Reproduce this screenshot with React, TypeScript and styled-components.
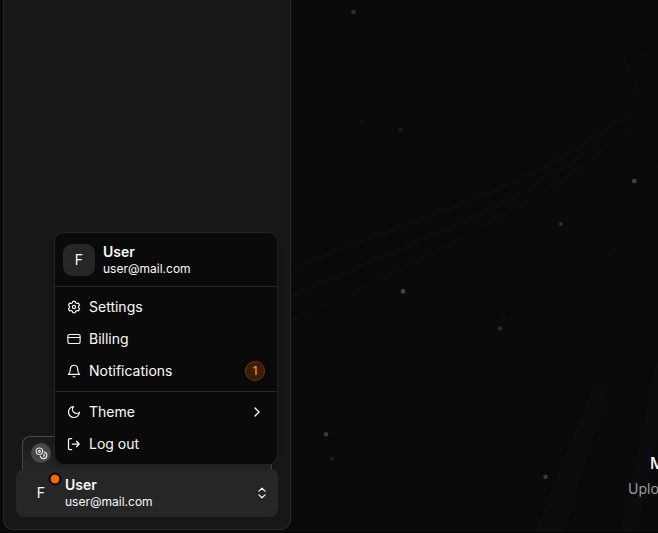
import React from 'react';
import styled, { createGlobalStyle } from 'styled-components';
import { ChevronRight } from 'lucide-react';

const GlobalStyle = createGlobalStyle`
  * { box-sizing: border-box; }
  body {
    margin: 0;
    overflow: hidden;
    background: #0a0a0a;
    color: #fafafa;
    font-family: Inter, "Liberation Sans", sans-serif;
    font-size: 14px;
    line-height: 20px;
  }
`;

const Page = styled.div`
  display: flex;
  width: 100vw;
  height: 533px;
  position: relative;
  overflow: hidden;
  border-bottom: 1px solid #030303;
`;

const Sidebar = styled.aside`
  position: relative;
  width: 288px;
  height: 530px;
  margin-left: 3px;
  padding: 0 12px 12px;
  flex: none;
  display: flex;
  flex-direction: column;
  justify-content: flex-end;
  background: #171717;
  border: 1px solid #272727;
  border-top: 0;
  border-radius: 0 0 10px 10px;
`;

const UsageCard = styled.div`
  height: 33px;
  margin: 0 6px;
  padding: 6px 8px;
  border: 1px solid #484848;
  border-bottom: 0;
  border-radius: 8px 8px 0 0;
  background: linear-gradient(#1a1a1a, #252525);
`;

const UsageIcon = styled.span`
  display: flex;
  align-items: center;
  justify-content: center;
  width: 20px;
  height: 20px;
  border-radius: 50%;
  background: #484848;
  color: #e5e5e5;
`;

const UserButton = styled.button`
  display: flex;
  align-items: center;
  gap: 8px;
  width: 262px;
  height: 48px;
  padding: 8px 9px;
  border: 0;
  border-radius: 8px;
  background: #262626;
  color: inherit;
  font: inherit;
  text-align: left;
`;

const Avatar = styled.span`
  position: relative;
  display: flex;
  flex: none;
  align-items: center;
  justify-content: center;
  width: 32px;
  height: 32px;
  border-radius: 9px;
  background: #262626;
`;

const StatusDot = styled.i`
  position: absolute;
  top: -4px;
  right: -4px;
  width: 13px;
  height: 13px;
  border: 2px solid #0d0d0d;
  border-radius: 50%;
  background: #ff6900;
  background-clip: padding-box;
  transform: translate(0.5px, -0.5px);
`;

const Identity = styled.span`
  display: flex;
  flex: 1;
  flex-direction: column;
`;

const Name = styled.strong`
  font-size: 14px;
  font-weight: 600;
  line-height: 17.5px;
`;

const Email = styled.span`
  font-size: 12px;
  line-height: 16px;
`;

const Menu = styled.div`
  position: absolute;
  z-index: 1;
  left: 50px;
  top: 232px;
  width: 224px;
  height: 233px;
  border: 1px solid #232323;
  border-radius: 10px;
  background: #0a0a0a;
  overflow: hidden;
  box-shadow: 0 4px 6px -1px rgba(0, 0, 0, 0.1), 0 2px 4px -2px rgba(0, 0, 0, 0.1);
`;

const MenuHeader = styled.header`
  display: flex;
  align-items: center;
  gap: 8px;
  height: 53px;
  padding: 1px 8px 0;
`;

const MenuGroup = styled.div`
  padding: 4px;
  border-top: 1px solid #272727;
`;

const MenuItem = styled.div`
  display: flex;
  align-items: center;
  gap: 8px;
  height: 32px;
  padding: 0 8px;
  color: #fafafa;

  & > svg { flex: none; }
`;

const ItemLabel = styled.span`
  flex: 1;
`;

const CountBadge = styled.span`
  display: flex;
  align-items: center;
  justify-content: center;
  width: 20px;
  height: 20px;
  border: 1px solid #75350c;
  border-radius: 50%;
  background: #3a1c09;
  color: #f58b14;
  font-size: 12px;
  font-weight: 500;
`;

const Content = styled.main`
  position: relative;
  flex: 1;
  min-width: 0;
  padding: 453px 0 0 337px;
  white-space: nowrap;
`;

const Backdrop = styled.svg`
  position: absolute;
  inset: 0;
`;

const Heading = styled.h2`
  position: relative;
  margin: 0 0 0 22px;
  font-size: 16px;
  font-weight: 500;
  line-height: 20px;
`;

const Hint = styled.p`
  position: relative;
  margin: 6px 0 0;
  color: #9a9a9a;
  font-size: 14px;
  line-height: 20px;
`;

const iconProps = {
  width: 14,
  height: 14,
  viewBox: '0 0 14 14',
  fill: 'none',
  stroke: 'currentColor',
  strokeWidth: 1.15,
  strokeLinecap: 'round' as const,
  strokeLinejoin: 'round' as const,
};

const GearIcon = () => (
  <svg {...iconProps}>
    <path d="M5.8 1.3h2.4l.45 1.5 1.2.7 1.55-.4 1.2 2.1L11.5 6.3v1.4l1.1 1.1-1.2 2.1-1.55-.4-1.2.7-.45 1.5H5.8l-.45-1.5-1.2-.7-1.55.4-1.2-2.1 1.1-1.1V6.3L1.4 5.2l1.2-2.1 1.55.4 1.2-.7z" />
    <circle cx="7" cy="7" r="1.6" />
  </svg>
);

const CardIcon = () => (
  <svg {...iconProps}>
    <rect x=".9" y="2.5" width="12.2" height="9" rx="1.4" />
    <path d="M.9 5.5h12.2" />
  </svg>
);

const BellIcon = () => (
  <svg {...iconProps}>
    <path d="M7 1.2a3.6 3.6 0 0 0-3.6 3.6c0 3.1-.7 4.4-2 5.6h11.2c-1.3-1.2-2-2.5-2-5.6A3.6 3.6 0 0 0 7 1.2z" />
    <path d="M6.1 12.7h1.8" />
  </svg>
);

const MoonIcon = () => (
  <svg {...iconProps} strokeWidth={1.2}>
    <path d="M6.6 1.5A3.75 3.75 0 0 0 12.5 7.1 5.5 5.5 0 1 1 6.6 1.5z" />
  </svg>
);

const LogoutIcon = () => (
  <svg {...iconProps} strokeWidth={1.25}>
    <path d="M4.7 1.5H2.8a1.3 1.3 0 0 0-1.3 1.3v8.4a1.3 1.3 0 0 0 1.3 1.3h1.9M5.2 7h7M9.5 4.3 12.2 7 9.5 9.7" />
  </svg>
);

const SelectorIcon = () => (
  <svg {...iconProps} strokeWidth={1.2}>
    <path d="M3.9 5.1 7 2.2l3.1 2.9M3.9 8.9 7 11.8l3.1-2.9" />
  </svg>
);

const CoinsIcon = () => (
  <svg {...iconProps} width={13} height={13} strokeWidth={1.25}>
    <circle cx="4.8" cy="4.6" r="3.5" />
    <circle cx="4.8" cy="4.6" r="1" />
    <path d="M10.1 5.5a3.6 3.6 0 1 1-4.4 4.4" />
    <path d="M9.6 8.1c1 .2.9 1.8-.5 1.8" />
  </svg>
);

const ribbons = [
  { d: 'M0 269C70 239 151 215 216 185S300 141 336 113', color: '#0d0e0f', width: 2 },
  { d: 'M0 297C77 260 150 235 212 202S290 158 310 140', color: '#0c0c10', width: 4 },
  { d: 'M0 321C90 279 149 251 219 211S309 155 343 121', color: '#0c0c10', width: 3 },
  { d: 'M367 33Q348 29 334 31C327 42 340 47 337 51', color: '#0d0c0c', width: 1.5 },
  { d: 'M367 58Q345 53 335 55C329 61 345 80 351 99', color: '#0f0b0c', width: 2.5 },
  { d: 'M367 164C342 204 306 232 288 258', color: '#0e0b0c', width: 2 },
  { d: 'M367 190C349 224 336 236 315 258', color: '#0e0b0c', width: 2 },
];

const stars = [
  [62.5, 12, 2.3, 0.15], [71, 122, 1.3, 0.06], [109.5, 129.5, 2, 0.07],
  [343.3, 181, 2.3, 0.23], [269.7, 224, 1.7, 0.18], [112, 291.4, 2.3, 0.23],
  [212.5, 318.5, 1.3, 0.04], [209, 328.5, 2.2, 0.13], [35, 434.3, 2.3, 0.2],
  [41, 459, 2.1, 0.08], [254.6, 476.7, 2.3, 0.2],
];

const Person = () => (
  <Identity>
    <Name>User</Name>
    <Email>user@mail.com</Email>
  </Identity>
);

export default function App() {
  return (
    <Page>
      <GlobalStyle />
      <Sidebar>
        <UsageCard>
          <UsageIcon><CoinsIcon /></UsageIcon>
        </UsageCard>
        <UserButton>
          <Avatar>F<StatusDot /></Avatar>
          <Person />
          <SelectorIcon />
        </UserButton>
        <Menu>
          <MenuHeader>
            <Avatar>F</Avatar>
            <Person />
          </MenuHeader>
          <MenuGroup>
            <MenuItem><GearIcon /><ItemLabel>Settings</ItemLabel></MenuItem>
            <MenuItem><CardIcon /><ItemLabel>Billing</ItemLabel></MenuItem>
            <MenuItem>
              <BellIcon />
              <ItemLabel>Notifications</ItemLabel>
              <CountBadge>1</CountBadge>
            </MenuItem>
          </MenuGroup>
          <MenuGroup>
            <MenuItem>
              <MoonIcon />
              <ItemLabel>Theme</ItemLabel>
              <ChevronRight size={16} />
            </MenuItem>
            <MenuItem><LogoutIcon /><ItemLabel>Log out</ItemLabel></MenuItem>
          </MenuGroup>
        </Menu>
      </Sidebar>
      <Content>
        <Backdrop width="367" height="532" viewBox="0 0 367 532" fill="none">
          <defs>
            <filter id="soft" x="-100%" y="-100%" width="300%" height="300%">
              <feGaussianBlur stdDeviation=".7" />
            </filter>
          </defs>
          {ribbons.map((r) => (
            <path key={r.d} d={r.d} stroke={r.color} strokeWidth={r.width} />
          ))}
          <path d="M301 390q4-5 10-2 5 3 4 9l-18 56-23 79h-30l31-80z" fill="#0c0c0f" />
          <path d="M367 356l-8 38-23 108-8 30h18l21-100z" fill="#0c0c0f" />
          {stars.map(([x, y, r, opacity]) => (
            <circle key={`${x}-${y}`} cx={x} cy={y} r={r} fill="#fff" opacity={opacity} filter="url(#soft)" />
          ))}
        </Backdrop>
        <Heading>My files</Heading>
        <Hint>Upload files</Hint>
      </Content>
    </Page>
  );
}
